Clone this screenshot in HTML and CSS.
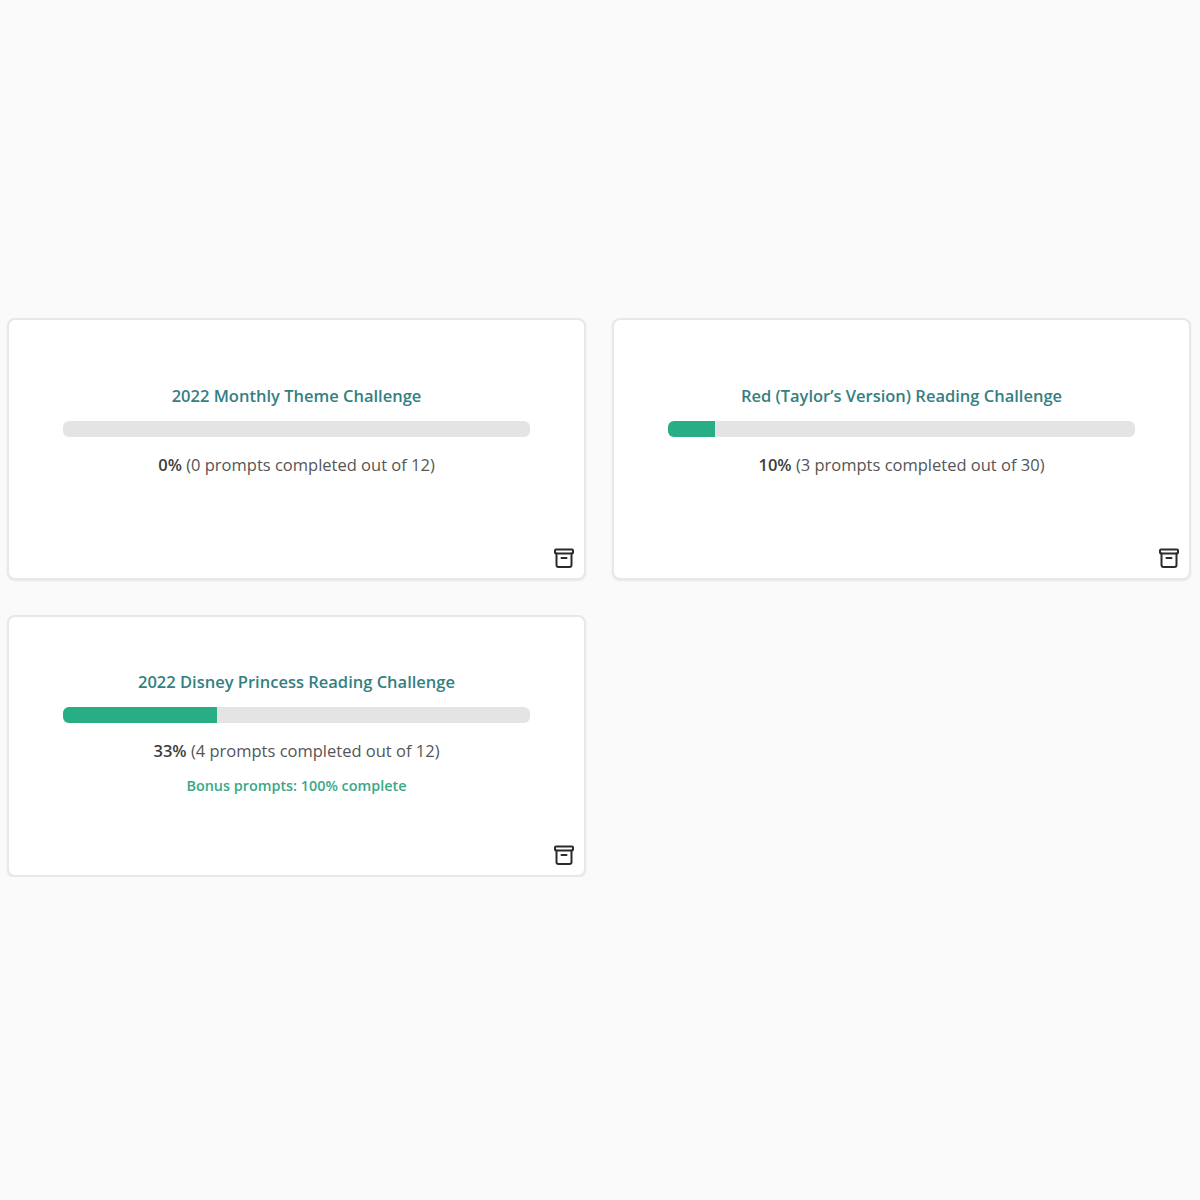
FILE: index.html
```html
<!DOCTYPE html>
<html lang="en">
<head>
<meta charset="UTF-8" />
<title>Reading Challenges</title>
<link rel="stylesheet" href="styles.css">
</head>
<body>

<div class="challenges">
  <div class="card">
    <a class="title">2022 Monthly Theme Challenge</a>
    <div class="bar"><div class="fill" style="width: 0%"></div></div>
    <p class="progress"><b>0%</b> (0 prompts completed out of 12)</p>
    <svg class="archive" viewBox="0 0 22 22" width="22" height="22"><rect x="2" y="2.5" width="18" height="4" rx="1"/><path d="M3.5 6.5V18a2 2 0 0 0 2 2h11a2 2 0 0 0 2-2V6.5M8.5 11h5"/></svg>
  </div>
  <div class="card">
    <a class="title">Red (Taylor’s Version) Reading Challenge</a>
    <div class="bar"><div class="fill" style="width: 10%"></div></div>
    <p class="progress"><b>10%</b> (3 prompts completed out of 30)</p>
    <svg class="archive" viewBox="0 0 22 22" width="22" height="22"><rect x="2" y="2.5" width="18" height="4" rx="1"/><path d="M3.5 6.5V18a2 2 0 0 0 2 2h11a2 2 0 0 0 2-2V6.5M8.5 11h5"/></svg>
  </div>
  <div class="card">
    <a class="title">2022 Disney Princess Reading Challenge</a>
    <div class="bar"><div class="fill" style="width: 33%"></div></div>
    <p class="progress"><b>33%</b> (4 prompts completed out of 12)</p>
    <p class="bonus">Bonus prompts: 100% complete</p>
    <svg class="archive" viewBox="0 0 22 22" width="22" height="22"><rect x="2" y="2.5" width="18" height="4" rx="1"/><path d="M3.5 6.5V18a2 2 0 0 0 2 2h11a2 2 0 0 0 2-2V6.5M8.5 11h5"/></svg>
  </div>
</div>

</body>
</html>
```

FILE: styles.css
```css
body {
  font-family: "Open Sans", sans-serif;
  background-color: #fafafa;
  margin: 0;
}
.challenges {
  display: grid;
  grid-template-columns: 579px 579px;
  column-gap: 26px;
  row-gap: 35px;
  padding: 318px 0 0 7px;
}
.card {
  position: relative;
  box-sizing: border-box;
  display: flex;
  flex-direction: column;
  justify-content: center;
  height: 262px;
  padding: 0 54px 27px;
  background-color: #fff;
  border: 2px solid #e8e8e8;
  border-radius: 8px;
  box-shadow: 0 1px 2px rgba(0, 0, 0, 0.08);
  text-align: center;
}
.title {
  display: block;
  font-size: 16.5px;
  font-weight: 600;
  line-height: 24px;
  color: #347f82;
}
.bar {
  height: 16px;
  margin-top: 13px;
  background-color: #e4e4e4;
  border-radius: 6px;
  overflow: hidden;
}
.fill {
  height: 100%;
  background-color: #27ae85;
}
.progress {
  margin: 16px 0 11px;
  font-size: 16.5px;
  line-height: 24px;
  color: #555;
}
.progress b {
  font-weight: 600;
  color: #3d3d3d;
}
.bonus {
  margin: 2px 0 0;
  font-size: 14.4px;
  font-weight: 600;
  line-height: 20px;
  color: #3aa888;
}
.archive {
  position: absolute;
  bottom: 9px;
  right: 9px;
  fill: none;
  stroke: #2b2b2b;
  stroke-width: 2;
  stroke-linejoin: round;
  stroke-linecap: round;
}
```
